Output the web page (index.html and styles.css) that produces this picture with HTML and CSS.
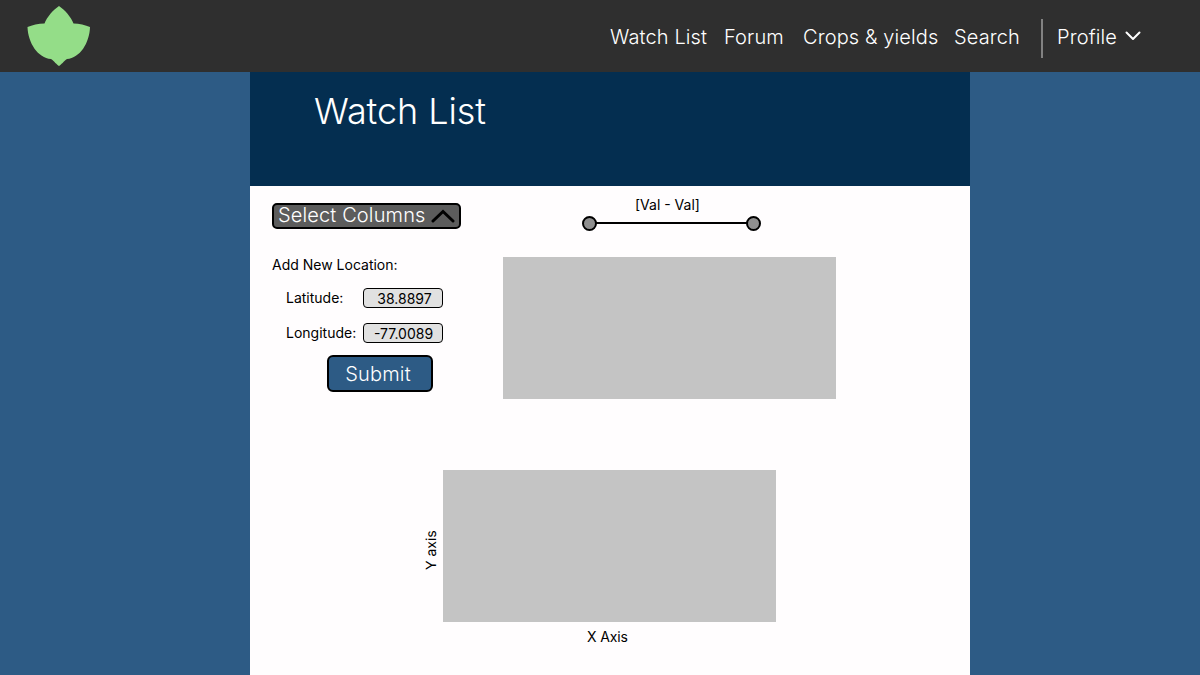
FILE: index.html
```html
<!DOCTYPE html>
<html lang="en">
<head>
<meta charset="utf-8">
<title>Watch List</title>
<link rel="stylesheet" href="styles.css">
</head>
<body>
<header class="topbar">
  <svg class="logo" width="64" height="62" viewBox="0 0 64 62"><path d="M32 1C26 5 20 12 17.500 18.500C11.500 18.700 5 20 0.500 22C1 38 11 53 24 54C27 56 30 60 32 61C34 60 37 56 40 54C53 53 62.500 38 63 22C58.500 20 52 18.700 46.500 18.500C44 12 38 5 32 1Z" fill="#94dd88"/></svg>
  <nav class="nav">
    <a>Watch List</a>
    <a>Forum</a>
    <a>Crops &amp; yields</a>
    <a>Search</a>
  </nav>
  <div class="profile">
    <span class="profile-name">Profile</span>
    <svg width="16" height="10" viewBox="0 0 16 10"><path d="M1.500 1.500L8 8L14.500 1.500" fill="none" stroke="#fff" stroke-width="2" stroke-linecap="round" stroke-linejoin="round"/></svg>
  </div>
</header>
<main class="page">
  <div class="banner"><h1 class="title">Watch List</h1></div>
  <div class="tools">
    <section class="controls">
      <button class="select"><span>Select Columns</span><svg width="24" height="16" viewBox="0 0 24 16"><path d="M2 13L12 3.500L22 13" fill="none" stroke="#000" stroke-width="3" stroke-linecap="round"/></svg></button>
      <p class="form-title">Add New Location:</p>
      <div class="field"><span class="label">Latitude:</span><span class="input latitude">38.8897</span></div>
      <div class="field"><span class="label">Longitude:</span><span class="input">-77.0089</span></div>
      <button class="submit">Submit</button>
    </section>
    <section class="preview">
      <div class="range-label">[Val - Val]</div>
      <div class="range"><i class="knob"></i><i class="track"></i><i class="knob"></i></div>
      <div class="map"></div>
    </section>
  </div>
  <section class="chart">
    <div class="y-label">Y axis</div>
    <div class="plot"></div>
    <div class="x-label">X Axis</div>
  </section>
</main>
</body>
</html>
```

FILE: styles.css
```css
* { box-sizing: border-box; }
body {
  margin: 0;
  height: 675px;
  overflow: hidden;
  background: #2d5b85;
  color: #000;
  font: 400 14px/20px Inter, sans-serif;
}
p, h1 { margin: 0; }
button { font: inherit; padding: 0; margin: 0; }
.topbar {
  display: flex;
  height: 72px;
  background: #2f2f2f;
  color: #fff;
  font-size: 20px;
  font-weight: 300;
  line-height: 24px;
  letter-spacing: 0.12px;
  white-space: nowrap;
}
.logo { margin: 5px 0 0 27px; }
.nav {
  display: grid;
  grid-template-columns: 114px 79px 151px 87px;
  margin: 25px 0 0 519px;
}
.profile {
  display: flex;
  height: 39px;
  margin-top: 19px;
  padding: 6px 0 0 14px;
  border-left: 2px solid #828282;
}
.profile-name { width: 68px; }
.profile svg { margin-top: 6px; }
.page {
  width: 720px;
  height: 603px;
  margin-left: 250px;
  background: #fffdfe;
}
.banner {
  height: 114px;
  padding: 17px 0 0 64px;
  background: #042e50;
}
.title {
  color: #fff;
  font-size: 36px;
  font-weight: 300;
  line-height: 45px;
  letter-spacing: -0.08px;
}
.tools { display: flex; height: 284px; }
.controls { width: 231px; padding: 17px 0 0 22px; }
.select {
  display: flex;
  align-items: center;
  width: 189px;
  height: 26px;
  padding: 0 0 2px 4px;
  border: 2px solid #000;
  border-radius: 5px;
  background: #5c5c5c;
  color: #fff;
  font-size: 20px;
  font-weight: 300;
  line-height: 24px;
  letter-spacing: 0.13px;
}
.select span { width: 153px; text-align: left; white-space: nowrap; }
.select svg { margin-top: 2px; }
.form-title { margin-top: 26px; }
.field { display: flex; height: 20px; margin: 13px 0 0 14px; }
.field + .field { margin-top: 15px; }
.label { width: 77px; }
.input {
  width: 80px;
  height: 20px;
  padding-left: 1px;
  border: 1px solid #000;
  border-radius: 4px;
  background: #e1e1e1;
  text-align: center;
}
.latitude { padding-left: 3px; }
.submit {
  display: block;
  width: 106px;
  height: 37px;
  margin: 12px 0 0 55px;
  padding-right: 4px;
  border: 2px solid #000;
  border-radius: 6px;
  background: #2d5b85;
  color: #fff;
  font-size: 20px;
  font-weight: 300;
  letter-spacing: 0.2px;
}
.preview { padding: 9px 0 0 22px; }
.range-label { padding-left: 132px; }
.range {
  display: flex;
  align-items: center;
  width: 179px;
  margin: 1px 0 0 79px;
}
.knob {
  width: 15px;
  height: 15px;
  border: 2px solid #000;
  border-radius: 50%;
  background: #8f8f8f;
}
.track { flex: 1; height: 2px; margin: 0 -1px 1px; background: #000; }
.map { width: 333px; height: 142px; margin-top: 26px; background: #c4c4c4; }
.chart {
  display: grid;
  grid-template-columns: 20px 333px;
  grid-template-rows: 152px 20px;
  row-gap: 5px;
  margin-left: 173px;
}
.y-label {
  writing-mode: vertical-rl;
  transform: rotate(180deg);
  padding-top: 52px;
  line-height: 18px;
  text-rendering: geometricPrecision;
}
.plot { background: #c4c4c4; }
.x-label { grid-column: 2; padding-left: 144px; letter-spacing: -0.15px; }
```
